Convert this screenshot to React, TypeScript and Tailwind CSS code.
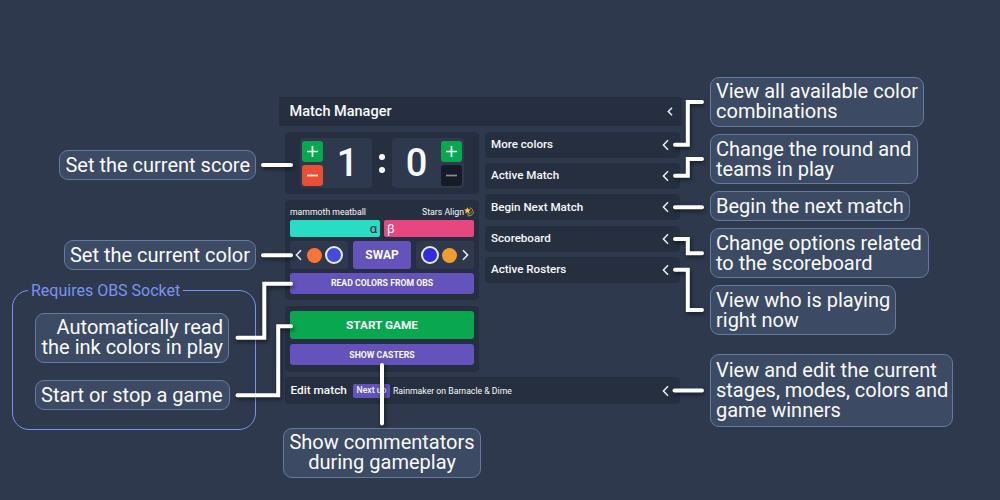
import type { ReactNode } from "react";

function Callout({ children, className = "" }: { children: ReactNode; className?: string }) {
  return (
    <div
      className={`flex shrink-0 flex-col justify-center whitespace-nowrap rounded-[9px] border border-[#667a9f] bg-[#3c4a64] px-[5px] text-[20px] leading-[20px] text-[#fafafa] ${className}`}
    >
      {children}
    </div>
  );
}

function Chevron({ flip = false, className = "" }: { flip?: boolean; className?: string }) {
  return (
    <svg className={`shrink-0 ${className}`} width="7" height="12" viewBox="0 0 7 12" fill="none" stroke="#eef0f4" strokeWidth="1.5">
      <path d={flip ? "M1 1.2 5.6 6 1 10.8" : "M6 1.2 1.4 6 6 10.8"} />
    </svg>
  );
}

function StepButton({ minus = false, className = "" }: { minus?: boolean; className?: string }) {
  return (
    <button className={`flex h-[21px] w-[21px] items-center justify-center rounded-[3px] ${className}`}>
      <svg width="13" height="13" viewBox="0 0 13 13" stroke="currentColor" strokeWidth="1.7">
        <path d={minus ? "M1 6.5H12" : "M1 6.5H12M6.5 1V12"} />
      </svg>
    </button>
  );
}

function Accordion({ title }: { title: string }) {
  return (
    <div className="flex h-[26px] items-center justify-between rounded-[4px] bg-[#262f3f] pl-[6px] pr-[11px] text-[11.6px] font-medium">
      <span>{title}</span>
      <Chevron />
    </div>
  );
}

function Stars() {
  return (
    <svg width="10" height="10" viewBox="0 0 10 10" fill="none">
      <path d="M3.4 0.2 4.4 2.3 6.7 2.6 5 4.2 5.3 6.4 3.4 5.3 1.3 6.3 1.8 4.1 0.2 2.5 2.5 2.2Z" fill="#f7c948" />
      <path d="M5.8 0.9C8.2 1.2 9 2.6 8.2 4.6M9.6 4.6C9.5 7.4 7.2 9 3.6 8.9M7.2 4.4C7.2 6.4 5.6 7.3 2.6 7.1" stroke="#dcb545" strokeWidth="0.8" />
    </svg>
  );
}

const connectors = [
  "M263 165H291",
  "M263 255.3H291",
  "M237.5 337.7H264.3V283.7H291",
  "M237.5 395.2H278.2V326.3H291",
  "M382 365V423.5",
  "M702 102H687.8V144.7H675",
  "M702 159H687.8V175.7H675",
  "M675 207.3H702",
  "M675 239H687.8V253.2H702",
  "M675 269.8H687.8V310H702",
  "M674.5 390.5H702",
];

export default function App() {
  return (
    <div className="relative flex h-[500px] w-[1000px] overflow-hidden bg-[#2f394d] font-['Roboto',sans-serif] text-[#f8f9fb]">
      <aside className="flex w-[279px] shrink-0 flex-col pt-[150px]">
        <Callout className="ml-[59px] h-[30px] w-[197px] items-end">Set the current score</Callout>
        <Callout className="ml-[64px] mt-[60px] h-[30px] w-[192px] items-end">Set the current color</Callout>
        <fieldset className="ml-[12px] mt-[12px] flex h-[148px] w-[244px] flex-col rounded-[17px] border border-[#7b93f0]">
          <legend className="ml-[15px] h-[16px] whitespace-nowrap px-[3px] text-[16px] leading-[18px] text-[#7b93f0]">
            Requires OBS Socket
          </legend>
          <div className="flex flex-col pl-[22px] pt-[15px]">
            <Callout className="h-[50px] w-[194px] pb-[2px] text-right">
              <span>Automatically read</span>
              <span>the ink colors in play</span>
            </Callout>
            <Callout className="mt-[17px] h-[30px] w-[195px]">Start or stop a game</Callout>
          </div>
        </fieldset>
      </aside>

      <main className="flex w-[403px] shrink-0 flex-col pt-[97px]">
        <header className="flex h-[29px] shrink-0 items-center justify-between bg-[#262f3f] pl-[10.5px] pr-[9px]">
          <h1 className="pt-px text-[14.5px] font-medium">Match Manager</h1>
          <svg width="6" height="9" viewBox="0 0 6 9" fill="none" stroke="#eef0f4" strokeWidth="1.5">
            <path d="M5 .8 1.3 4.5 5 8.2" />
          </svg>
        </header>

        <div className="flex h-[246px] shrink-0 gap-[6px] pl-[6px] pt-[6px]">
          <div className="flex w-[194px] flex-col gap-[6px]">
            <section className="flex h-[62px] shrink-0 items-center justify-between rounded-[4px] bg-[#262f3f] px-[15px]">
              <div className="flex h-[50px] w-[72px] items-center rounded-[4px] bg-[#2f394d] pl-[2px]">
                <div className="flex flex-col gap-[3px]">
                  <StepButton className="bg-[#08a750]" />
                  <StepButton minus className="bg-[#e84f35]" />
                </div>
                <span className="flex-1 text-center text-[38px] font-medium leading-none">1</span>
              </div>
              <div className="flex flex-col gap-[7px]">
                <i className="h-[6px] w-[6px] rounded-full bg-white" />
                <i className="h-[6px] w-[6px] rounded-full bg-white" />
              </div>
              <div className="flex h-[50px] w-[72px] items-center rounded-[4px] bg-[#2f394d] pr-[2px]">
                <span className="flex-1 text-center text-[38px] font-medium leading-none">0</span>
                <div className="flex flex-col gap-[3px]">
                  <StepButton className="bg-[#08a750]" />
                  <StepButton minus className="bg-[#171b26] text-[#898d94]" />
                </div>
              </div>
            </section>

            <section className="flex h-[100px] shrink-0 flex-col rounded-[4px] bg-[#262f3f] px-[5px] pt-[5px]">
              <div className="flex h-[15px] items-center justify-between text-[8.7px]">
                <span>mammoth meatball</span>
                <span className="flex items-center">Stars Align<Stars /></span>
              </div>
              <div className="flex h-[17px] gap-[4px] text-[13px] leading-[18px]">
                <div className="flex-1 rounded-[2px] bg-[#2bdcc4] pr-[3px] text-right text-[#17202b]">α</div>
                <div className="flex-1 rounded-[2px] bg-[#e5487f] pl-[3px]">β</div>
              </div>
              <div className="mt-[4px] flex h-[28px] justify-between">
                <div className="flex w-[58px] items-center rounded-[3px] bg-[#2f394d] pl-[5px]">
                  <Chevron />
                  <i className="ml-[5px] h-[15px] w-[15px] rounded-full bg-[#fa7434]" />
                  <i className="ml-[3px] h-[18px] w-[18px] rounded-full border-2 border-[#e8eaf3] bg-[#424adf]" />
                </div>
                <button className="w-[58px] rounded-[3px] bg-[#6353bb] text-[12px] font-bold">SWAP</button>
                <div className="flex w-[58px] items-center justify-end rounded-[3px] bg-[#2f394d] pr-[5px]">
                  <i className="mr-[3px] h-[18px] w-[18px] rounded-full border-2 border-[#e8eaf3] bg-[#2f2cdd]" />
                  <i className="mr-[5px] h-[15px] w-[15px] rounded-full bg-[#f29c30]" />
                  <Chevron flip />
                </div>
              </div>
              <button className="mt-[4px] h-[21px] rounded-[3px] bg-[#6353bb] pt-px text-[8.7px] font-bold">READ COLORS FROM OBS</button>
            </section>

            <section className="flex h-[66px] shrink-0 flex-col gap-[5px] rounded-[4px] bg-[#262f3f] px-[5px] pt-[5px]">
              <button className="h-[28px] rounded-[3px] bg-[#08a750] pt-px text-[11.8px] font-bold">START GAME</button>
              <button className="h-[21px] rounded-[3px] bg-[#6353bb] pt-[2px] text-[8.7px] font-bold">SHOW CASTERS</button>
            </section>
          </div>

          <div className="flex w-[195px] flex-col gap-[5.2px]">
            <Accordion title="More colors" />
            <Accordion title="Active Match" />
            <Accordion title="Begin Next Match" />
            <Accordion title="Scoreboard" />
            <Accordion title="Active Rosters" />
          </div>
        </div>

        <section className="ml-[6px] mt-[5px] flex h-[27px] w-[395px] shrink-0 items-center rounded-[4px] bg-[#262f3f] pl-[5.5px] pr-[11px]">
          <span className="w-[62.5px] text-[11.8px] font-medium">Edit match</span>
          <span className="flex h-[14px] w-[37px] items-center justify-center rounded-[2px] bg-[#6353bb] text-[8.7px] font-medium">Next up</span>
          <span className="ml-[3px] flex-1 whitespace-nowrap pt-[2px] text-[8.7px]">Rainmaker on Barnacle &amp; Dime</span>
          <Chevron />
        </section>

        <Callout className="ml-[4px] mt-[24px] h-[50px] w-[198px] pb-[2px] text-center">
          <span>Show commentators</span>
          <span>during gameplay</span>
        </Callout>
      </main>

      <aside className="flex w-[318px] shrink-0 flex-col gap-[7px] pl-[28px] pt-[77px]">
        <Callout className="h-[50px] w-[214px] pb-[2px]">
          <span>View all available color</span>
          <span>combinations</span>
        </Callout>
        <Callout className="h-[50px] w-[208px] pb-px">
          <span>Change the round and</span>
          <span>teams in play</span>
        </Callout>
        <Callout className="h-[30px] w-[200px]">Begin the next match</Callout>
        <Callout className="h-[50px] w-[219px]">
          <span>Change options related</span>
          <span>to the scoreboard</span>
        </Callout>
        <Callout className="h-[50px] w-[186px]">
          <span>View who is playing</span>
          <span>right now</span>
        </Callout>
        <Callout className="mt-[12px] h-[73px] w-[243px] pb-[1px]">
          <span>View and edit the current</span>
          <span>stages, modes, colors and</span>
          <span>game winners</span>
        </Callout>
      </aside>

      <svg
        className="pointer-events-none absolute inset-0 drop-shadow-[1px_2px_2px_rgba(0,0,0,0.55)]"
        width="1000"
        height="500"
        fill="none"
        stroke="#ffffff"
        strokeWidth="4"
        strokeLinecap="round"
      >
        {connectors.map((d) => (
          <path key={d} d={d} />
        ))}
      </svg>
    </div>
  );
}
